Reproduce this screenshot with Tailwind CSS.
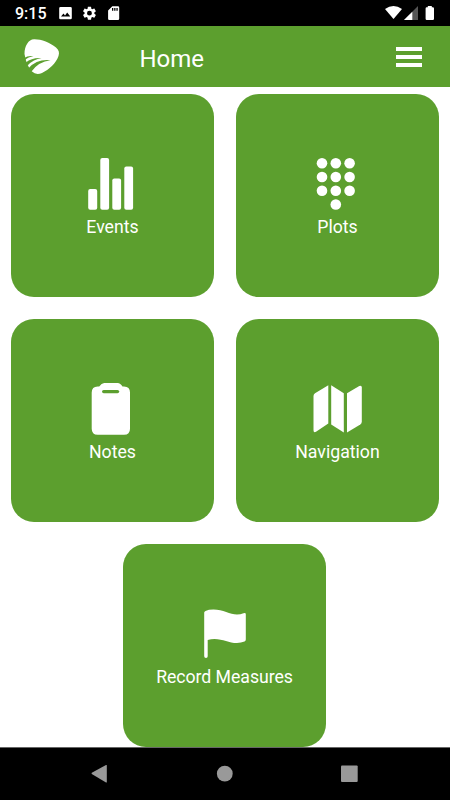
<!DOCTYPE html>
<html lang="en">
<head>
    <meta charset="UTF-8">
    <meta name="viewport" content="width=device-width, initial-scale=1.0">
    <title>Home</title>
    <script src="https://cdn.jsdelivr.net/npm/@tailwindcss/browser@4"></script>
</head>
<body class="bg-white text-white font-[Roboto,sans-serif]">
    <div class="w-[450px] h-[800px] flex flex-col overflow-hidden">
        <!-- Status bar -->
        <div class="h-[26px] shrink-0 bg-black flex items-center justify-between">
            <div class="flex items-center pl-[15px]">
                <span class="w-[40px] text-[16px] leading-[26px] font-medium pt-[2px]">9:15</span>
                <svg class="w-[70px] h-[26px]" viewBox="55 0 70 26" fill="#fff">
                    <path fill-rule="evenodd" d="M60.500 7h10q1.300 0 1.300 1.300v9.700q0 1.300-1.300 1.300h-10q-1.300 0-1.300-1.300v-9.700q0-1.300 1.300-1.300zM61 16.600h9.300l-3.100-4.100-2.200 2.900-1.500-1.800z"/>
                    <path transform="translate(81.300 5) scale(.68)" d="M19.140 12.940c.04-.3.06-.61.06-.94s-.02-.64-.07-.94l2.030-1.580c.18-.14.23-.41.12-.61l-1.920-3.320c-.12-.22-.37-.29-.59-.22l-2.390.96c-.5-.38-1.030-.7-1.620-.94l-.36-2.540c-.04-.24-.24-.41-.48-.41h-3.840c-.24 0-.43.17-.47.41l-.36 2.540c-.59.24-1.130.57-1.620.94l-2.390-.96c-.22-.08-.47 0-.59.22L2.740 8.870c-.12.21-.08.47.12.61l2.030 1.580c-.05.3-.09.63-.09.94s.02.64.07.94l-2.030 1.580c-.18.14-.23.41-.12.61l1.920 3.320c.12.22.37.29.59.22l2.390-.96c.5.38 1.030.7 1.620.94l.36 2.540c.05.24.24.41.48.41h3.840c.24 0 .44-.17.47-.41l.36-2.540c.59-.24 1.130-.56 1.620-.94l2.390.96c.22.08.47 0 .59-.22l1.920-3.320c.12-.22.07-.47-.12-.61zM12 15.600A3.600 3.600 0 1 1 12 8.400a3.600 3.600 0 0 1 0 7.200z"/>
                    <path fill-rule="evenodd" d="M112.300 6.200h5.600q1.300 0 1.300 1.300V18.700q0 1.300-1.300 1.300h-8.500q-1.300 0-1.300-1.300V10.400zM112 8v2.700h1.300V8zM114.200 8v2.700h1.300V8zM116.400 8v2.700h1.300V8z"/>
                </svg>
            </div>
            <svg class="w-[70px] h-[26px]" viewBox="380 0 70 26" fill="#fff">
                <path d="M385 9Q393.500 3.200 402 9L393.500 19z"/>
                <path d="M418 6v14h-14z" fill="#555"/>
                <path d="M412.300 11.700V20H404z"/>
                <path d="M427.800 6h4v1.200h1q1.200 0 1.200 1.200v10.400q0 1.200-1.200 1.200h-6q-1.200 0-1.200-1.200V8.400q0-1.200 1.200-1.200h1z"/>
            </svg>
        </div>

        <!-- Header -->
        <div class="h-[61px] shrink-0 bg-[#5c9f2e] flex items-center">
            <svg class="ml-[20px] w-[44px] h-[44px]" viewBox="20 35 44 44">
                <path fill="#fff" d="M24.500 54C24.500 46 28.500 39.200 34 39.200C41 39 50 42.500 56 47.500C59 50 59.600 52.500 58.500 56C56 63.500 49 69.500 42 73Q36 75.500 32 71.500Q26.500 66 24.500 54z"/>
                <g fill="#5c9f2e">
                    <path d="M24 58Q28.500 55.200 33.500 56.200Q28.500 56.500 24.500 60.500z"/>
                    <path d="M25.800 62.500Q32 57.300 41.500 58Q33.500 59.200 27.500 65.500z"/>
                    <path d="M28.500 68.300Q37 58.800 50.500 60.300Q38.500 61.700 31.500 71.500z"/>
                </g>
            </svg>
            <h1 class="ml-[75.500px] w-[256px] text-[24px] leading-[30px] pt-[5px]">Home</h1>
            <button class="w-[26px] flex flex-col gap-[4px]">
                <span class="h-[4px] bg-white"></span>
                <span class="h-[4px] bg-white"></span>
                <span class="h-[4px] bg-white"></span>
            </button>
        </div>

        <!-- Menu tiles -->
        <div class="flex-1 min-h-0 overflow-hidden pt-[7px] flex flex-wrap justify-center content-start gap-x-[22px] gap-y-[22px]">
            <div class="w-[203px] h-[203px] rounded-[23px] bg-[#5c9f2e] flex flex-col items-center pt-[60px]">
                <svg class="w-[60px] h-[60px] shrink-0" viewBox="83 154 60 60" fill="#fff">
                    <rect x="88.200" y="189" width="9" height="20.800" rx="2"/>
                    <rect x="100.300" y="158" width="8.800" height="51.800" rx="2"/>
                    <rect x="112.300" y="178.600" width="8.800" height="31.200" rx="2"/>
                    <rect x="124.300" y="166.600" width="8.800" height="43.200" rx="2"/>
                </svg>
                <p class="text-[17.700px] leading-[26px]">Events</p>
            </div>
            <div class="w-[203px] h-[203px] rounded-[23px] bg-[#5c9f2e] flex flex-col items-center pt-[60px]">
                <svg class="w-[60px] h-[60px] shrink-0" viewBox="308 154 60 60" fill="#fff">
                    <circle cx="322" cy="163.200" r="5.300"/><circle cx="335.800" cy="163.200" r="5.300"/><circle cx="349.600" cy="163.200" r="5.300"/>
                    <circle cx="322" cy="177" r="5.300"/><circle cx="335.800" cy="177" r="5.300"/><circle cx="349.600" cy="177" r="5.300"/>
                    <circle cx="322" cy="190.700" r="5.300"/><circle cx="335.800" cy="190.700" r="5.300"/><circle cx="349.600" cy="190.700" r="5.300"/>
                    <circle cx="335.800" cy="204.500" r="5.300"/>
                </svg>
                <p class="text-[17.700px] leading-[26px]">Plots</p>
            </div>
            <div class="w-[203px] h-[203px] rounded-[23px] bg-[#5c9f2e] flex flex-col items-center pt-[60px]">
                <svg class="w-[60px] h-[60px] shrink-0" viewBox="83 379 60 60" fill="#fff">
                    <path d="M97.700 386.500H99.200Q101.500 383 104.200 383H117.700Q120.400 383 122.500 386.500H124Q130 386.500 130 392.500V428.700Q130 434.700 124 434.700H97.700Q91.700 434.700 91.700 428.700V392.500Q91.700 386.500 97.700 386.500z"/>
                    <rect x="102" y="389.900" width="17.200" height="3.400" rx="1.700" fill="#5c9f2e"/>
                </svg>
                <p class="text-[17.700px] leading-[26px]">Notes</p>
            </div>
            <div class="w-[203px] h-[203px] rounded-[23px] bg-[#5c9f2e] flex flex-col items-center pt-[60px]">
                <svg class="w-[60px] h-[60px] shrink-0" viewBox="308 379 60 60" fill="#fff">
                    <path d="M328.300 385.300V423.500L316 431.800Q313.500 433 313.500 430.300V396Q313.500 394.200 315 393.300z"/>
                    <path d="M331.200 385.200L343.800 393.200V432.600L331.200 424.500z"/>
                    <path d="M347 393.200L359.300 386Q361.800 385 361.800 387.500V421.500Q361.800 423.500 360.300 424.500L347 432.600z"/>
                </svg>
                <p class="text-[17.700px] leading-[26px]">Navigation</p>
            </div>
            <div class="w-[203px] h-[203px] mr-px rounded-[23px] bg-[#5c9f2e] flex flex-col items-center pt-[60px]">
                <svg class="w-[60px] h-[60px] shrink-0" viewBox="195 604 60 60" fill="#fff">
                    <path d="M204.200 612.500Q204.300 611.500 205.500 611Q208.500 609.600 213.500 609.600C223 609.600 230 614.600 237 614.600Q240.500 614.600 243.500 613.200Q245.800 612.200 245.800 614.300V639.500Q245.800 641 244.500 641.600Q241 643 237 643C229 643 223 638.900 214.500 638.900Q211 638.900 207.700 640V656.200Q207.700 658 206 658Q204.200 658 204.200 656.200z"/>
                </svg>
                <p class="text-[17.700px] leading-[26px] tracking-[-0.050px]">Record Measures</p>
            </div>
        </div>

        <!-- Navigation bar -->
        <div class="h-[53px] shrink-0 bg-black border-t border-[#666]">
            <svg class="w-[450px] h-[52px]" viewBox="0 748 450 52" fill="#999">
                <path d="M91.800 772.800Q91.300 773.500 91.800 774L106 782.500Q106.800 782.700 106.800 782V765.500Q106.800 764.800 106 765z"/>
                <circle cx="224.800" cy="773.700" r="7.900"/>
                <rect x="341" y="765.500" width="16.700" height="16.500" rx="1"/>
            </svg>
        </div>
    </div>
</body>
</html>
